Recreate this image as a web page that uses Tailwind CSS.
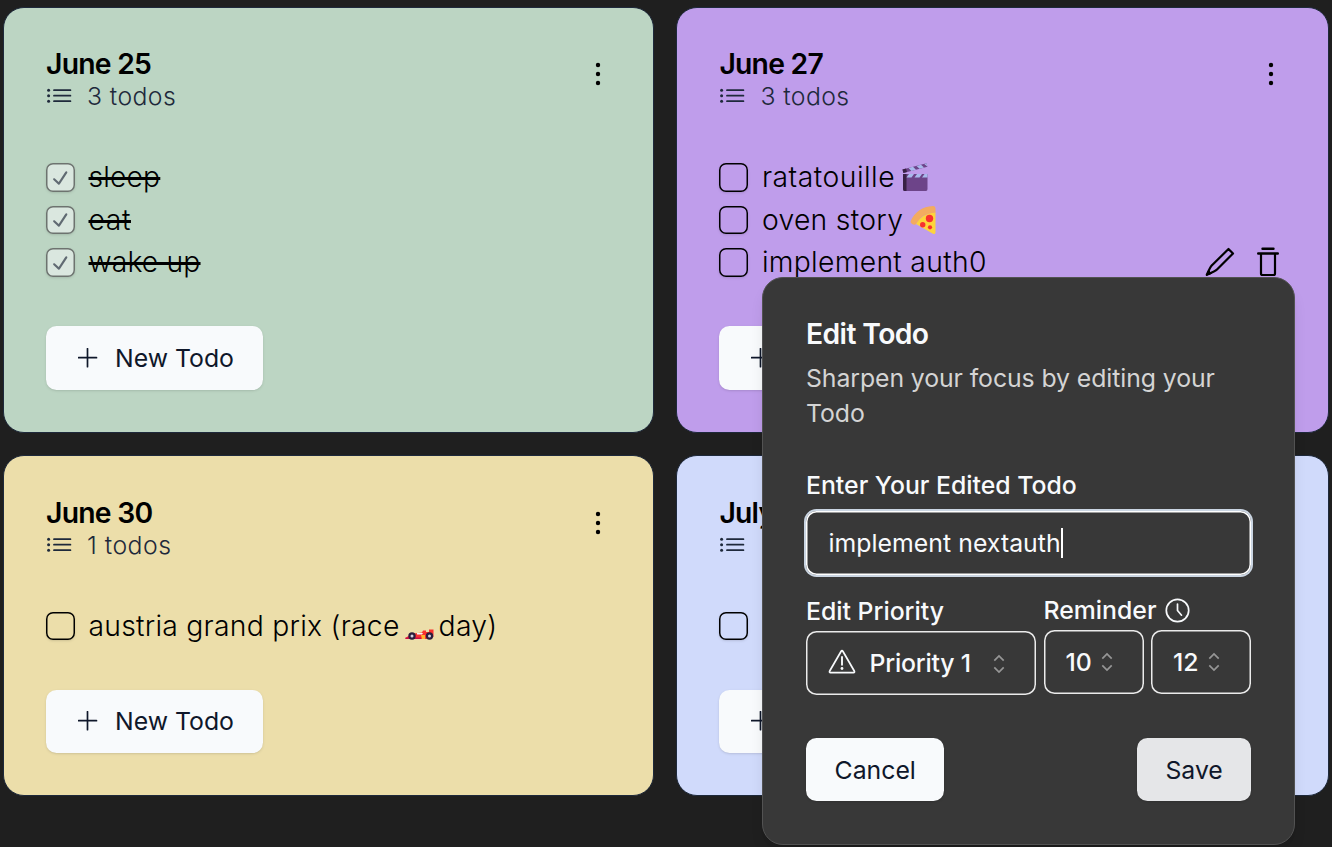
<!DOCTYPE html>
<html lang="en">
<head>
<meta charset="utf-8">
<title>Todos</title>
<script src="https://cdn.jsdelivr.net/npm/@tailwindcss/browser@4"></script>
</head>
<body class="relative h-[847px] w-[1332px] overflow-hidden bg-[#1f1f1f] font-['Inter',sans-serif] text-black">
<svg class="hidden">
  <symbol id="list" viewBox="0 0 26 16"><g fill="currentColor"><circle cx="2.600" cy="2.200" r="1.500"/><circle cx="2.600" cy="7.700" r="1.500"/><circle cx="2.600" cy="13.200" r="1.500"/></g><path d="M8 2.200H24.400M8 7.700H24.400M8 13.200H24.400" stroke="currentColor" stroke-width="1.800" stroke-linecap="round"/></symbol>
  <symbol id="dots" viewBox="0 0 6 24"><g fill="currentColor"><circle cx="3" cy="3" r="2.200"/><circle cx="3" cy="12" r="2.200"/><circle cx="3" cy="21" r="2.200"/></g></symbol>
  <symbol id="plus" viewBox="0 0 20 20"><path d="M9.500 .7V18.700M.5 9.700H18.500" stroke="currentColor" stroke-width="1.700" stroke-linecap="round"/></symbol>
  <symbol id="check" viewBox="0 0 15 15"><path d="M11.4669 3.72684C11.7558 3.91574 11.8369 4.30308 11.648 4.59198L7.39799 11.092C7.29783 11.2452 7.13556 11.3467 6.95402 11.3699C6.77247 11.3931 6.58989 11.3355 6.45446 11.2124L3.70446 8.71241C3.44905 8.48022 3.43023 8.08494 3.66242 7.82953C3.89461 7.57412 4.28989 7.55529 4.5453 7.78749L6.75292 9.79441L10.6018 3.90792C10.7907 3.61902 11.178 3.53795 11.4669 3.72684Z" fill="currentColor"/></symbol>
  <symbol id="caret" viewBox="0 0 12 20"><path d="M1.300 6.600L6 1.900L10.700 6.600M1.300 13.400L6 18.100L10.700 13.400" fill="none" stroke="currentColor" stroke-width="1.700"/></symbol>
</svg>

<main class="grid grid-cols-[651px_653px] grid-rows-[426px_341px] gap-[22px] pt-[7px] pl-[3px]">
  <section class="flex flex-col rounded-[21px] border border-[#1e293b] bg-[#bcd5c3] pt-[41px] pr-[41px] pl-[42px]">
    <header class="flex justify-between">
      <div>
        <h2 class="h-[30px] text-[28.3px] leading-[30px] font-semibold tracking-[-0.75px]">June 25</h2>
        <div class="flex h-[35px] items-center gap-[15px] text-[#1e293b]"><svg class="-mt-px h-4 w-[26px]"><use href="#list"/></svg><span class="text-[24.8px] font-[340] tracking-[0.4px]">3 todos</span></div>
      </div>
      <svg class="mt-[13px] mr-[11px] h-6 w-1.5"><use href="#dots"/></svg>
    </header>
    <ul class="mt-[42px] flex flex-col text-[28.3px] font-[340] tracking-[0.15px]">
      <li class="flex h-[42.5px] items-center gap-[14px]"><span class="grid size-[28.5px] place-items-center rounded-[7px] inset-ring-[1.5px] inset-ring-black/50 bg-slate-50/50 shadow-sm"><svg class="mt-px size-[26px] text-[#0f172a]/60"><use href="#check"/></svg></span><span class="line-through decoration-[2.6px]">sleep</span></li>
      <li class="flex h-[42.5px] items-center gap-[14px]"><span class="grid size-[28.5px] place-items-center rounded-[7px] inset-ring-[1.5px] inset-ring-black/50 bg-slate-50/50 shadow-sm"><svg class="mt-px size-[26px] text-[#0f172a]/60"><use href="#check"/></svg></span><span class="tracking-[0.6px] line-through decoration-[2.6px]">eat</span></li>
      <li class="flex h-[42.5px] items-center gap-[14px]"><span class="grid size-[28.5px] place-items-center rounded-[7px] inset-ring-[1.5px] inset-ring-black/50 bg-slate-50/50 shadow-sm"><svg class="mt-px size-[26px] text-[#0f172a]/60"><use href="#check"/></svg></span><span class="line-through decoration-[2.6px]">wake up</span></li>
    </ul>
    <button class="mt-[42.5px] flex h-[63.5px] w-[216.5px] items-center gap-[17px] rounded-[10.5px] bg-slate-50 pl-[32px] text-[24.8px] text-[#0f172a] shadow-sm"><svg class="size-5"><use href="#plus"/></svg><span class="pt-px">New Todo</span></button>
  </section>

  <section class="flex flex-col rounded-[21px] border border-[#1e293b] bg-[#bf9deb] pt-[41px] pr-[42px] pl-[42.4px]">
    <header class="flex justify-between">
      <div>
        <h2 class="h-[30px] text-[28.3px] leading-[30px] font-semibold tracking-[-0.75px]">June 27</h2>
        <div class="flex h-[35px] items-center gap-[15px] text-[#1e293b]"><svg class="-mt-px h-4 w-[26px]"><use href="#list"/></svg><span class="text-[24.8px] font-[340] tracking-[0.4px]">3 todos</span></div>
      </div>
      <svg class="mt-[13px] mr-[12px] h-6 w-1.5"><use href="#dots"/></svg>
    </header>
    <ul class="mt-[42px] flex flex-col text-[28.3px] font-[340] tracking-[0.3px]">
      <li class="flex h-[42.5px] items-center gap-[14px]"><span class="size-[28.5px] rounded-[7px] inset-ring-[1.5px] inset-ring-black shadow-sm"></span><span class="flex items-center gap-[7px] tracking-[0.5px]">ratatouille
        <svg class="h-[28px] w-[26px]" viewBox="0 0 26 28" role="img" aria-label="clapper board"><path d="M1 11H25.5V26Q25.5 28 24 28H2.5Q1 28 1 26Z" fill="#6d4489"/><path d="M1 11H4.5V28H2.5Q1 28 1 26Z" fill="#382044"/><path d="M7 11H12L9.5 14.5H4.5ZM15 11H20L17.5 14.5H12.5ZM22.500 11H25.5V14.5H20Z" fill="#a8b9ec"/><path d="M.5 6.500L24.500 .3L25.400 3.800L1.400 10Z" fill="#6d4489"/><path d="M.5 6.500L4 5.600L5 9.100L1.400 10Z" fill="#382044"/><path d="M6.500 5L11 3.800L14 6.700L9.500 7.900ZM14.500 2.900L19 1.700L22 4.600L17.500 5.800ZM22.300 .9L24.500 .3L25.200 3.400Z" fill="#a8b9ec"/></svg></span></li>
      <li class="flex h-[42.5px] items-center gap-[14px]"><span class="size-[28.5px] rounded-[7px] inset-ring-[1.5px] inset-ring-black shadow-sm"></span><span class="flex items-center gap-[7px]">oven story
        <svg class="h-[28px] w-[26px]" viewBox="0 0 26 28" role="img" aria-label="pizza"><path d="M6 18Q11 8 25.500 6V26Q25.500 29 22.500 27.600Z" fill="#fdd43c"/><path d="M.7 15Q7 1 23 0Q25.500 0 25.500 3V6.500Q12 7 5.500 18.500Q3 19.500 1 17Q.3 16 .7 15Z" fill="#f3ab60"/><g fill="#f8312f"><circle cx="19.500" cy="12.500" r="3.700"/><circle cx="12.700" cy="18.700" r="2.700"/><circle cx="20" cy="21.300" r="2.100"/></g></svg></span></li>
      <li class="flex h-[42.5px] items-center gap-[14px]"><span class="size-[28.5px] rounded-[7px] inset-ring-[1.5px] inset-ring-black shadow-sm"></span><span>implement auth0</span>
        <svg class="ml-auto h-[30px] w-[30px]" viewBox="0 0 30 30" fill="none" stroke="#000" stroke-width="2.200" stroke-linejoin="round"><path d="M23.500 2L28 6.500L12 22.500Q10.500 24 1.800 27.800Q5.500 19.500 7 18.200Z"/><path d="M1.500 28.300L3.500 23.500L6.500 26.500Z" fill="#000" stroke-width="1"/></svg>
        <svg class="mr-[7.5px] ml-[8px] h-[30px] w-[22px]" viewBox="0 0 22 30" fill="none" stroke="#000" stroke-width="2.200"><path d="M5.500 1.800H16.500M1.200 6.500H20.800" stroke-width="2.400" stroke-linecap="round"/><path d="M4 6.500V26.500Q4 28 5.500 28H16.500Q18 28 18 26.500V6.500"/></svg></li>
    </ul>
    <button class="mt-[42.5px] flex h-[63.5px] w-[216.5px] items-center gap-[17px] rounded-[10.5px] bg-slate-50 pl-[32px] text-[24.8px] text-[#0f172a] shadow-sm"><svg class="size-5"><use href="#plus"/></svg><span class="pt-px">New Todo</span></button>
  </section>

  <section class="flex flex-col rounded-[21px] border border-[#1e293b] bg-[#ecdeaa] pt-[41.5px] pr-[41px] pl-[42px]">
    <header class="flex justify-between">
      <div>
        <h2 class="h-[31px] text-[28.3px] leading-[30px] font-semibold tracking-[-0.75px]">June 30</h2>
        <div class="flex h-[35px] items-center gap-[15px] text-[#1e293b]"><svg class="-mt-[3px] h-4 w-[26px]"><use href="#list"/></svg><span class="text-[24.8px] font-[340] tracking-[0.5px]">1 todos</span></div>
      </div>
      <svg class="mt-[13px] mr-[11px] h-6 w-1.5"><use href="#dots"/></svg>
    </header>
    <ul class="mt-[41px] flex flex-col text-[28.3px] font-[340] tracking-[0.25px]">
      <li class="flex h-[42.5px] items-center gap-[14px]"><span class="size-[28.5px] rounded-[7px] inset-ring-[1.5px] inset-ring-black shadow-sm"></span><span class="flex items-center">austria grand prix (race
        <svg class="mx-[5px] mt-[17px] h-[11px] w-[29px]" viewBox="0 0 29 11" role="img" aria-label="racing car"><path d="M.5 9Q4 5.500 9 4.500L17 3.500L18 1.500H21V3H24V.5H28.500V8H25V10H.5Z" fill="#f8312f"/><path d="M.5 8.500H16V10H.5Z" fill="#ca0b4a"/><path d="M12 4H18L17 5.500H12Z" fill="#f4f4f4"/><path d="M16 6H20V10H17Z" fill="#ffb02e"/><g fill="#2b1d3d"><circle cx="7" cy="7" r="3.700"/><circle cx="24.500" cy="7" r="3.700"/></g><g fill="#d6d3e2"><circle cx="7" cy="7" r="1.500"/><circle cx="24.500" cy="7" r="1.500"/></g></svg>day)</span></li>
    </ul>
    <button class="mt-[42.500px] flex h-[63.5px] w-[216.5px] items-center gap-[17px] rounded-[10.5px] bg-slate-50 pl-[32px] text-[24.8px] text-[#0f172a] shadow-sm"><svg class="size-5"><use href="#plus"/></svg><span>New Todo</span></button>
  </section>

  <section class="flex flex-col rounded-[21px] border border-[#1e293b] bg-[#d0dafb] pt-[41.5px] pr-[42px] pl-[42.4px]">
    <header>
      <h2 class="h-[31px] text-[28.3px] leading-[30px] font-semibold tracking-[-0.75px]">July</h2>
      <div class="flex h-[35px] items-center text-[#1e293b]"><svg class="-mt-[3px] h-4 w-[26px]"><use href="#list"/></svg></div>
    </header>
    <ul class="mt-[41px]"><li class="flex h-[42.5px] items-center"><span class="size-[28.5px] rounded-[7px] inset-ring-[1.5px] inset-ring-black shadow-sm"></span></li></ul>
    <button class="mt-[42.500px] flex h-[63.5px] w-[216.5px] items-center rounded-[10.5px] bg-slate-50 pl-[32px] text-[#0f172a] shadow-sm"><svg class="size-5"><use href="#plus"/></svg></button>
  </section>
</main>

<div role="dialog" class="absolute top-[276.5px] left-[762px] flex h-[568.5px] w-[533px] flex-col rounded-[21px] border-[1.5px] border-[#525252] bg-[#383838] pt-[41px] pr-[43px] pl-[43px] text-slate-50 shadow-lg">
  <h3 class="h-[30px] text-[28.3px] leading-[30px] font-semibold tracking-[-0.6px]">Edit Todo</h3>
  <p class="mt-[12.5px] text-[24.8px] leading-[35.4px] tracking-[-0.08px] text-[#d4d4d4]">Sharpen your focus by editing your Todo</p>
  <label class="mt-[40px] h-[26px] text-[24.8px] leading-[26px] font-medium">Enter Your Edited Todo</label>
  <div class="mt-[13.5px] flex h-[63.5px] shrink-0 items-center rounded-[10.5px] bg-[#383838] pl-[22.5px] text-[24.8px] tracking-[0.04px] ring-2 ring-slate-300 inset-ring-[1.5px] inset-ring-white"><span class="pt-px">implement nextauth</span><span class="h-[30px] w-[2px] bg-white"></span></div>
  <div class="mt-[21.5px] flex">
    <div class="mr-[8px] w-[230px]">
      <div class="mt-px h-[34px] text-[24.8px] leading-[28px] font-medium">Edit Priority</div>
      <div class="flex h-[63.5px] items-center rounded-[10.5px] pl-[21.5px] text-[24.8px] inset-ring-[1.5px] inset-ring-white/90">
        <svg class="mr-[14px] mb-[3px] h-[25px] w-[28px]" viewBox="0 0 28 25" fill="none" stroke="currentColor" stroke-width="1.700" stroke-linejoin="round"><path d="M13 2.500Q14 .7 15 2.500L26.300 22Q27 23.600 25.500 23.600H2.500Q1 23.600 1.700 22Z"/><path d="M14 8V15.800" stroke-width="1.900" stroke-linecap="round"/><circle cx="14" cy="19.500" r="1.400" fill="currentColor" stroke="none"/></svg>
        <span class="pt-px font-medium tracking-[-0.2px]">Priority 1</span><svg class="mt-px ml-[22px] h-5 w-3 text-[#969696]"><use href="#caret"/></svg></div>
    </div>
    <div>
      <div class="flex h-[34px] gap-[9px] text-[24.8px] leading-[28px] font-medium">Reminder
        <svg class="mt-[2px] size-[25px]" viewBox="0 0 25 25" fill="none" stroke="currentColor" stroke-width="1.700"><circle cx="12.500" cy="12.500" r="11.200"/><path d="M12.500 6V12.500L16.500 17.200" stroke-linecap="round"/></svg></div>
      <div class="flex gap-[7.5px]">
        <div class="flex h-[63.500px] w-[100px] items-center gap-[9px] rounded-[10.5px] pl-[22px] text-[24.8px] font-medium inset-ring-[1.5px] inset-ring-white/90"><span class="pt-px">10</span><svg class="h-5 w-3 text-[#969696]"><use href="#caret"/></svg></div>
        <div class="flex h-[63.500px] w-[100px] items-center gap-[9px] rounded-[10.5px] pl-[22px] text-[24.8px] font-medium inset-ring-[1.5px] inset-ring-white/90"><span class="pt-px">12</span><svg class="h-5 w-3 text-[#969696]"><use href="#caret"/></svg></div>
      </div>
    </div>
  </div>
  <footer class="mt-[43px] flex w-[445.4px] justify-between text-[24.8px] text-[#0f172a]">
    <button class="h-[63.5px] w-[138.4px] rounded-[10.5px] bg-slate-50 pt-[2px] shadow-sm">Cancel</button>
    <button class="h-[63.5px] w-[114.5px] rounded-[10.5px] bg-[#e5e6e8] pt-[2px] shadow-sm">Save</button>
  </footer>
</div>
</body>
</html>
